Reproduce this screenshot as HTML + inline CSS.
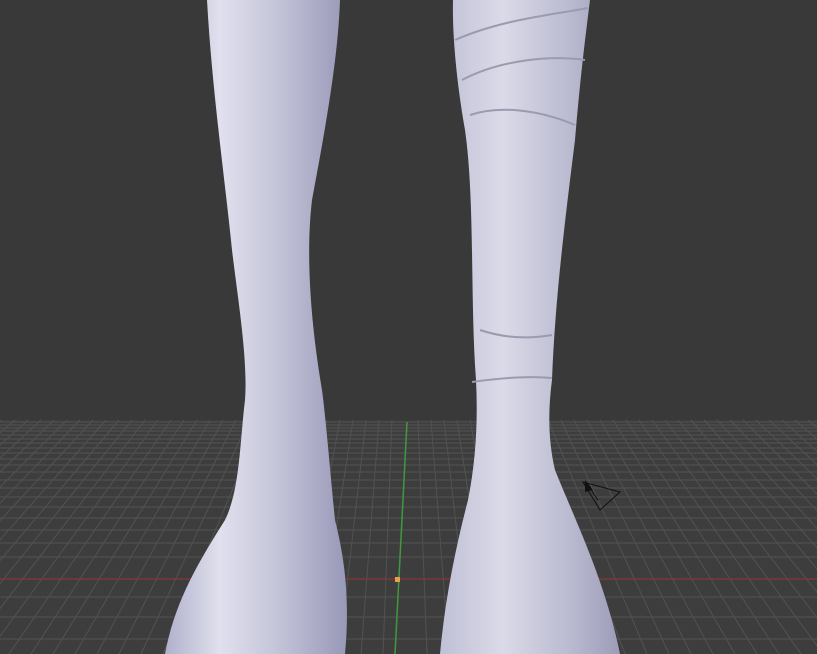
<!DOCTYPE html>
<html><head><meta charset="utf-8"><style>
html,body{margin:0;padding:0;background:#393939;}
svg{display:block}
</style></head><body>
<svg width="817" height="654" viewBox="0 0 817 654" xmlns="http://www.w3.org/2000/svg">
<defs>
<linearGradient id="lg" x1="0" y1="0" x2="1" y2="0">
<stop offset="0" stop-color="#b0b0cc"/><stop offset="0.3" stop-color="#e0e0ee"/><stop offset="0.6" stop-color="#c6c6da"/><stop offset="1" stop-color="#9898b8"/>
</linearGradient>
<linearGradient id="rg" x1="0" y1="0" x2="1" y2="0">
<stop offset="0" stop-color="#c0c0d6"/><stop offset="0.35" stop-color="#dadae8"/><stop offset="0.7" stop-color="#bcbcd2"/><stop offset="1" stop-color="#9c9cb8"/>
</linearGradient>
</defs>
<rect width="817" height="654" fill="#393939"/>
<rect y="420" width="817" height="234" fill="#3d3d3d"/>
<g stroke="#525252" stroke-width="1">
<line x1="0" y1="422" x2="817" y2="422"/><line x1="0" y1="425" x2="817" y2="425"/><line x1="0" y1="428" x2="817" y2="428"/><line x1="0" y1="431" x2="817" y2="431"/><line x1="0" y1="435" x2="817" y2="435"/><line x1="0" y1="439" x2="817" y2="439"/><line x1="0" y1="443" x2="817" y2="443"/><line x1="0" y1="448" x2="817" y2="448"/><line x1="0" y1="453" x2="817" y2="453"/><line x1="0" y1="459" x2="817" y2="459"/><line x1="0" y1="465" x2="817" y2="465"/><line x1="0" y1="472" x2="817" y2="472"/><line x1="0" y1="480" x2="817" y2="480"/><line x1="0" y1="488" x2="817" y2="488"/><line x1="0" y1="497" x2="817" y2="497"/><line x1="0" y1="507" x2="817" y2="507"/><line x1="0" y1="518" x2="817" y2="518"/><line x1="0" y1="530" x2="817" y2="530"/><line x1="0" y1="543" x2="817" y2="543"/><line x1="0" y1="557" x2="817" y2="557"/><line x1="0" y1="597" x2="817" y2="597"/><line x1="0" y1="617" x2="817" y2="617"/><line x1="0" y1="639" x2="817" y2="639"/>
<line x1="2" y1="420" x2="-277" y2="654"/><line x1="15" y1="420" x2="-255" y2="654"/><line x1="28" y1="420" x2="-233" y2="654"/><line x1="41" y1="420" x2="-211" y2="654"/><line x1="54" y1="420" x2="-189" y2="654"/><line x1="67" y1="420" x2="-167" y2="654"/><line x1="80" y1="420" x2="-145" y2="654"/><line x1="93" y1="420" x2="-123" y2="654"/><line x1="106" y1="420" x2="-101" y2="654"/><line x1="119" y1="420" x2="-79" y2="654"/><line x1="132" y1="420" x2="-57" y2="654"/><line x1="145" y1="420" x2="-35" y2="654"/><line x1="158" y1="420" x2="-13" y2="654"/><line x1="171" y1="420" x2="9" y2="654"/><line x1="184" y1="420" x2="31" y2="654"/><line x1="197" y1="420" x2="53" y2="654"/><line x1="210" y1="420" x2="75" y2="654"/><line x1="223" y1="420" x2="97" y2="654"/><line x1="236" y1="420" x2="119" y2="654"/><line x1="249" y1="420" x2="141" y2="654"/><line x1="262" y1="420" x2="163" y2="654"/><line x1="275" y1="420" x2="185" y2="654"/><line x1="288" y1="420" x2="207" y2="654"/><line x1="301" y1="420" x2="229" y2="654"/><line x1="314" y1="420" x2="251" y2="654"/><line x1="327" y1="420" x2="273" y2="654"/><line x1="340" y1="420" x2="295" y2="654"/><line x1="353" y1="420" x2="317" y2="654"/><line x1="366" y1="420" x2="339" y2="654"/><line x1="379" y1="420" x2="361" y2="654"/><line x1="392" y1="420" x2="383" y2="654"/>
<line x1="418" y1="420" x2="427" y2="654"/><line x1="431" y1="420" x2="449" y2="654"/><line x1="444" y1="420" x2="471" y2="654"/><line x1="457" y1="420" x2="493" y2="654"/><line x1="470" y1="420" x2="515" y2="654"/><line x1="483" y1="420" x2="537" y2="654"/><line x1="496" y1="420" x2="559" y2="654"/><line x1="509" y1="420" x2="581" y2="654"/><line x1="522" y1="420" x2="603" y2="654"/><line x1="535" y1="420" x2="625" y2="654"/><line x1="548" y1="420" x2="647" y2="654"/><line x1="561" y1="420" x2="669" y2="654"/><line x1="574" y1="420" x2="691" y2="654"/><line x1="587" y1="420" x2="713" y2="654"/><line x1="600" y1="420" x2="735" y2="654"/><line x1="613" y1="420" x2="757" y2="654"/><line x1="626" y1="420" x2="779" y2="654"/><line x1="639" y1="420" x2="801" y2="654"/><line x1="652" y1="420" x2="823" y2="654"/><line x1="665" y1="420" x2="845" y2="654"/><line x1="678" y1="420" x2="867" y2="654"/><line x1="691" y1="420" x2="889" y2="654"/><line x1="704" y1="420" x2="911" y2="654"/><line x1="717" y1="420" x2="933" y2="654"/><line x1="730" y1="420" x2="955" y2="654"/><line x1="743" y1="420" x2="977" y2="654"/><line x1="756" y1="420" x2="999" y2="654"/><line x1="769" y1="420" x2="1021" y2="654"/><line x1="782" y1="420" x2="1043" y2="654"/><line x1="795" y1="420" x2="1065" y2="654"/><line x1="808" y1="420" x2="1087" y2="654"/>
</g>
<line x1="0" y1="579" x2="817" y2="579" stroke="#7a3a3a" stroke-width="1.5"/>
<line x1="407" y1="422" x2="395" y2="654" stroke="#3f9a3f" stroke-width="1.5"/>
<rect x="395" y="577" width="5" height="5" fill="#e8a050"/>
<path d="M207,0 L340,0 C338,60 325,130 312,200 C305,260 312,330 322,390 C326,420 330,470 335,520 C345,560 350,600 345,654 L165,654 C175,600 200,560 225,520 C240,490 240,440 245,400 C248,360 238,300 232,250 C225,180 212,90 207,0 Z" fill="url(#lg)"/>
<path d="M453,0 L590,0 C585,40 580,80 575,140 C565,220 555,300 552,380 C548,410 548,440 555,470 C575,520 605,580 620,654 L440,654 C445,600 455,550 468,500 C476,460 478,420 476,380 C470,300 475,200 465,130 C458,90 452,40 453,0 Z" fill="url(#rg)"/>
<g fill="none" stroke="#9a9ab0" stroke-width="2">
<path d="M455,40 C500,20 550,15 588,8"/>
<path d="M462,80 C500,60 550,55 585,60"/>
<path d="M470,115 C500,105 540,110 575,125"/>
<path d="M472,382 C500,378 530,376 552,378"/>
<path d="M480,330 C510,340 535,338 552,335"/>
</g>
<path d="M583,482 L600,510 L620,492 Z M590,488 L598,500" fill="none" stroke="#111" stroke-width="1"/>
<path d="M585,480 L593,490 L585,492 Z" fill="#111"/>
</svg>
</body></html>
